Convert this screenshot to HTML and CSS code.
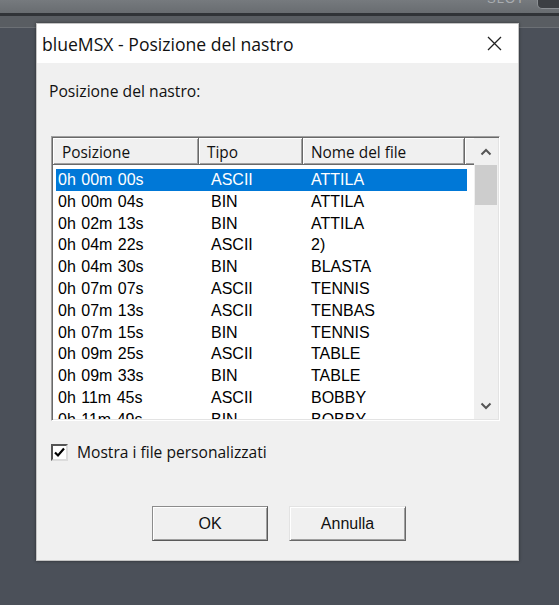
FILE: index.html
```html
<!DOCTYPE html>
<html lang="it">
<head>
    <meta charset="UTF-8">
    <meta name="viewport" content="width=device-width, initial-scale=1.0">
    <title>blueMSX - Posizione del nastro</title>
    <link rel="stylesheet" href="styles.css">
</head>
<body>
    <!-- main emulator window behind the dialog -->
    <div id="toolbar">
        <span class="slot-label">SLOT</span>
        <span class="slot-btn"></span>
    </div>
    <div id="toolbar-edge"></div>
    <div id="workspace"></div>

    <div id="dialog">
        <div class="titlebar">
            <span class="title">blueMSX - Posizione del nastro</span>
            <span class="close">
                <svg width="15" height="15" viewBox="0 0 15 15">
                    <path d="M1 1 L14 14 M14 1 L1 14" stroke="#222" stroke-width="1.3" fill="none"/>
                </svg>
            </span>
        </div>
        <div class="content">
            <div class="label">Posizione del nastro:</div>

            <div class="listview">
                <div class="list-main">
                    <div class="list-header">
                        <div class="hcell hcell-pos">Posizione</div>
                        <div class="hcell hcell-type">Tipo</div>
                        <div class="hcell hcell-name">Nome del file</div>
                        <div class="hcell hcell-fill"></div>
                    </div>
                    <div class="list-rows">
                        <div class="row selected"><span>0h 00m 00s</span><span>ASCII</span><span>ATTILA</span></div>
                        <div class="row"><span>0h 00m 04s</span><span>BIN</span><span>ATTILA</span></div>
                        <div class="row"><span>0h 02m 13s</span><span>BIN</span><span>ATTILA</span></div>
                        <div class="row"><span>0h 04m 22s</span><span>ASCII</span><span>2)</span></div>
                        <div class="row"><span>0h 04m 30s</span><span>BIN</span><span>BLASTA</span></div>
                        <div class="row"><span>0h 07m 07s</span><span>ASCII</span><span>TENNIS</span></div>
                        <div class="row"><span>0h 07m 13s</span><span>ASCII</span><span>TENBAS</span></div>
                        <div class="row"><span>0h 07m 15s</span><span>BIN</span><span>TENNIS</span></div>
                        <div class="row"><span>0h 09m 25s</span><span>ASCII</span><span>TABLE</span></div>
                        <div class="row"><span>0h 09m 33s</span><span>BIN</span><span>TABLE</span></div>
                        <div class="row"><span>0h 11m 45s</span><span>ASCII</span><span>BOBBY</span></div>
                        <div class="row"><span>0h 11m 49s</span><span>BIN</span><span>BOBBY</span></div>
                    </div>
                </div>
                <div class="scrollbar">
                    <div class="sb-btn">
                        <svg width="12" height="8" viewBox="0 0 12 8">
                            <path d="M1.5 6.5 L6 2 L10.5 6.5" stroke="#555" stroke-width="2" fill="none"/>
                        </svg>
                    </div>
                    <div class="sb-track">
                        <div class="sb-thumb"></div>
                    </div>
                    <div class="sb-btn">
                        <svg width="12" height="8" viewBox="0 0 12 8">
                            <path d="M1.5 1.5 L6 6 L10.5 1.5" stroke="#555" stroke-width="2" fill="none"/>
                        </svg>
                    </div>
                </div>
            </div>

            <label class="check">
                <span class="check-box">
                    <svg width="13" height="13" viewBox="0 0 13 13">
                        <path d="M2 6.5 L5 9.5 L11 2.5" stroke="#000" stroke-width="2.2" fill="none"/>
                    </svg>
                </span>
                <span>Mostra i file personalizzati</span>
            </label>

            <div class="buttons">
                <button class="btn btn-default">OK</button>
                <button class="btn">Annulla</button>
            </div>
        </div>
    </div>
</body>
</html>
```

FILE: styles.css
```css
body {
    margin: 0;
    height: 605px;
    overflow: hidden;
    background-color: #4b5059;
    font-family: "Open Sans", "Noto Sans", sans-serif;
    color: #111;
}

/* emulator window chrome */
#toolbar {
    height: 13px;
    background: linear-gradient(#767a7e, #686c70);
    border-bottom: 3px solid #303337;
    display: flex;
    justify-content: flex-end;
    align-items: flex-start;
    overflow: hidden;
}
.slot-label {
    font-family: "Liberation Sans", sans-serif;
    font-size: 13px;
    color: #a9adb1;
    margin-top: -9px;
    margin-right: 12px;
    letter-spacing: 1px;
}
.slot-btn {
    width: 24px;
    height: 8px;
    border: 1px solid #8c9094;
    border-top: none;
    border-radius: 0 0 5px 5px;
    background-color: #3c3f43;
    margin-right: -4px;
}
#toolbar-edge {
    height: 11px;
    background-color: #595d62;
    border-bottom: 1px solid #6c7075;
}
#workspace {
    height: 577px;
    background-color: #4b5059;
}

/* dialog window */
#dialog {
    position: absolute;
    left: 36px;
    top: 23px;
    width: 481px;
    height: 536px;
    border: 1px solid #c4c4c4;
    box-shadow: 0 0 3px rgba(0, 0, 0, 0.45);
    background-color: #f0f0f0;
    display: flex;
    flex-direction: column;
}
.titlebar {
    height: 39px;
    background-color: #ffffff;
    display: flex;
    align-items: center;
    justify-content: space-between;
    padding: 0 16px 0 5px;
}
.title {
    font-size: 17.6px;
    color: #111;
}
.close {
    display: flex;
}

.content {
    flex: 1;
    padding: 18px 0 0 0;
}
.label {
    font-size: 15.7px;
    line-height: 20px;
    margin-left: 12px;
}

/* list view */
.listview {
    margin: 35px 0 0 14px;
    width: 445px;
    height: 281px;
    display: flex;
    background-color: #fff;
    border: 1px solid;
    border-color: #a0a0a0 #ffffff #ffffff #a0a0a0;
    box-shadow: inset 1px 1px #696969, inset -1px -1px #e3e3e3;
    padding: 1px;
}
.list-main {
    flex: 1;
    display: flex;
    flex-direction: column;
    overflow: hidden;
}
.list-header {
    display: grid;
    grid-template-columns: 146px 104px 162px 1fr;
    height: 27px;
    flex-shrink: 0;
}
.hcell {
    background-color: #f0f0f0;
    border-right: 1px solid #696969;
    border-bottom: 1px solid #696969;
    box-shadow: inset 1px 1px #ffffff, inset -1px -1px #a0a0a0;
    font-size: 15.4px;
    line-height: 20px;
    padding: 5px 0 0 8px;
    white-space: nowrap;
}
.hcell-pos {
    padding-left: 9px;
}
.hcell-fill {
    border-right: none;
    box-shadow: inset 1px 1px #ffffff, inset 0 -1px #a0a0a0;
}
.list-rows {
    padding: 4px 0 0 3px;
    overflow: hidden;
}
.row {
    display: grid;
    grid-template-columns: 153px 100px 1fr;
    width: 409px;
    height: 21.8px;
    padding-left: 2px;
    font-family: "Liberation Sans", Arial, sans-serif;
    font-size: 16px;
    line-height: 21.8px;
    word-spacing: 1px;
    color: #000;
}
.row.selected {
    background-color: #0078d7;
    color: #ffffff;
}

/* vertical scrollbar */
.scrollbar {
    width: 24px;
    background-color: #f0f0f0;
    display: flex;
    flex-direction: column;
}
.sb-btn {
    height: 27px;
    display: flex;
    align-items: center;
    justify-content: center;
}
.sb-track {
    flex: 1;
    padding: 0 1px;
}
.sb-thumb {
    height: 40px;
    background-color: #cdcdcd;
}

/* checkbox */
.check {
    display: flex;
    align-items: center;
    gap: 9px;
    margin: 20px 0 0 14px;
    font-size: 15.6px;
}
.check-box {
    width: 13px;
    height: 13px;
    background-color: #fff;
    border: 2px solid;
    border-color: #555 #dcdcdc #dcdcdc #555;
    display: flex;
}

/* dialog buttons */
.buttons {
    display: flex;
    gap: 21px;
    margin: 43px 0 0 115px;
}
.btn {
    width: 116px;
    height: 35px;
    font-family: "Liberation Sans", Arial, sans-serif;
    font-size: 16px;
    color: #111;
    background-color: #f0f0f0;
    border: 1px solid;
    border-color: #e3e3e3 #696969 #696969 #e3e3e3;
    box-shadow: inset 1px 1px #ffffff, inset -1px -1px #a0a0a0;
    padding: 0;
}
.btn-default {
    border-color: #8c8c8c #5a5a5a #5a5a5a #8c8c8c;
}
.btn + .btn {
    width: 117px;
}
```
